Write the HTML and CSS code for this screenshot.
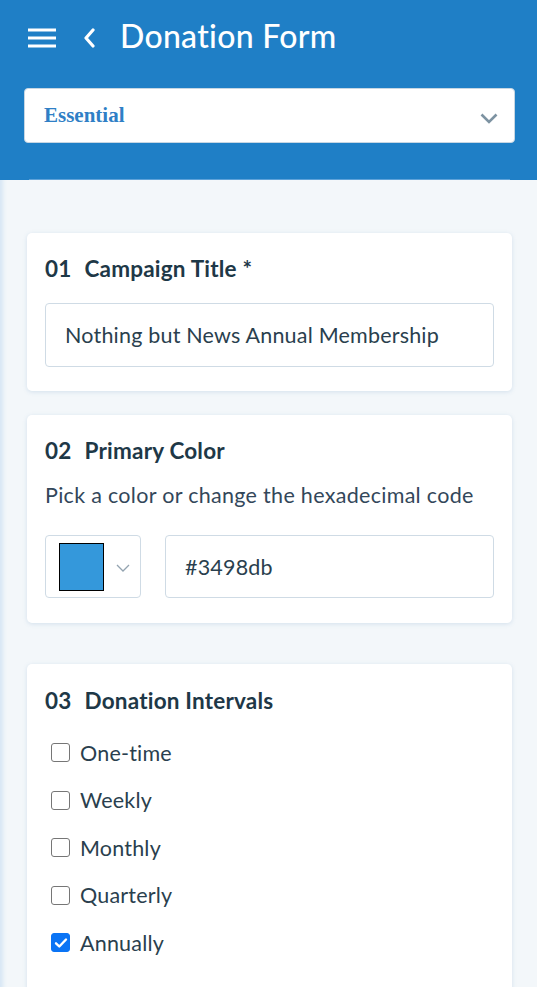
FILE: index.html
```html
<!DOCTYPE html>
<html lang="en">
<head>
<meta charset="utf-8">
<title>Donation Form</title>
<link rel="stylesheet" href="styles.css">
</head>
<body>
<header class="topbar">
  <div class="toprow">
    <button class="icon-btn menu" aria-label="Menu">
      <svg width="28" height="20" viewBox="0 0 28 20"><rect x="0" y="0.5" width="28" height="3" fill="#fff"/><rect x="0" y="8.5" width="28" height="3" fill="#fff"/><rect x="0" y="16.5" width="28" height="3" fill="#fff"/></svg>
    </button>
    <button class="icon-btn back" aria-label="Back">
      <svg width="12" height="20" viewBox="0 0 12 20"><path d="M10 2 L3 10 L10 18" fill="none" stroke="#fff" stroke-width="3.2" stroke-linecap="round" stroke-linejoin="round"/></svg>
    </button>
    <h1 class="page-title">Donation Form</h1>
  </div>
  <div class="plan-select">
    <span class="plan-name">Essential</span>
    <svg class="plan-caret" width="18" height="11" viewBox="0 0 18 11"><path d="M1.5 1.5 L9 9 L16.5 1.5" fill="none" stroke="#7d93a2" stroke-width="2.6"/></svg>
  </div>
  <div class="topbar-line"></div>
</header>

<main class="content">
  <section class="card card-title">
    <h2 class="card-heading"><span class="num">01</span>Campaign Title *</h2>
    <div class="field">Nothing but News Annual Membership</div>
  </section>

  <section class="card card-color">
    <h2 class="card-heading"><span class="num">02</span>Primary Color</h2>
    <p class="hint">Pick a color or change the hexadecimal code</p>
    <div class="color-row">
      <div class="picker">
        <span class="swatch"></span>
        <svg class="picker-caret" width="14" height="8" viewBox="0 0 14 8"><path d="M1 1 L7 7 L13 1" fill="none" stroke="#93a3b0" stroke-width="1.3"/></svg>
      </div>
      <div class="field hex">#3498db</div>
    </div>
  </section>

  <section class="card card-intervals">
    <h2 class="card-heading"><span class="num">03</span>Donation Intervals</h2>
    <ul class="checks">
      <li class="check"><span class="box"></span>One-time</li>
      <li class="check"><span class="box"></span>Weekly</li>
      <li class="check"><span class="box"></span>Monthly</li>
      <li class="check"><span class="box"></span>Quarterly</li>
      <li class="check"><span class="box on"><svg width="14" height="12" viewBox="0 0 14 12"><path d="M2 6.3 L5.3 9.5 L12 2.5" fill="none" stroke="#fff" stroke-width="2.4" stroke-linecap="round" stroke-linejoin="round"/></svg></span>Annually</li>
    </ul>
  </section>
</main>
</body>
</html>
```

FILE: styles.css
```css
* { box-sizing: border-box; }

html, body {
  margin: 0;
  padding: 0;
}

body {
  background: #f3f7fa;
  font-family: Lato, "Noto Sans", "Liberation Sans", sans-serif;
  color: #2a3f4e;
  box-shadow: inset 4px 0 4px -1px #d6e6f4;
  min-height: 987px;
}

.topbar {
  background: #1f7fc6;
  height: 180px;
  padding: 0 22px 0 24px;
  display: flex;
  flex-direction: column;
}

.toprow {
  height: 75px;
  display: flex;
  align-items: center;
}

.icon-btn {
  background: none;
  border: 0;
  padding: 0;
  display: flex;
  cursor: pointer;
}

.menu {
  margin-left: 4px;
  margin-top: 1px;
}

.back {
  margin-left: 27px;
  margin-top: 1px;
}

.page-title {
  margin: -3px 0 0 25px;
  color: #fff;
  font-size: 32px;
  font-weight: 500;
  letter-spacing: 0.3px;
  line-height: 40px;
}

.plan-select {
  margin-top: 13px;
  height: 55px;
  background: #fff;
  border: 1px solid #c6d6e3;
  border-radius: 4px;
  display: flex;
  align-items: center;
  justify-content: space-between;
  padding: 0 16px 0 19px;
}

.plan-name {
  font-family: "Liberation Serif", "Times New Roman", serif;
  font-weight: 700;
  font-size: 21px;
  color: #2f7fc6;
  margin-top: 0;
}

.plan-caret {
  margin-top: 5px;
}

.topbar-line {
  margin: auto 5px 0 5px;
  height: 1px;
  background: #5ea2d9;
}

.content {
  padding: 53px 25px 0 27px;
  display: flex;
  flex-direction: column;
}

.card {
  background: #fff;
  border-radius: 5px;
  box-shadow: 0 1px 4px rgba(120, 160, 200, 0.25);
  padding: 22px 18px 24px 18px;
}

.card-color {
  margin-top: 24px;
  padding-bottom: 25px;
}

.card-intervals {
  margin-top: 41px;
  padding-top: 23px;
  padding-bottom: 30px;
}

.card-heading {
  margin: 0;
  font-size: 22.5px;
  font-weight: 700;
  line-height: 28px;
  color: #1e3847;
  letter-spacing: 0.2px;
}

.num {
  margin-right: 13px;
}

.field {
  height: 64px;
  border: 1px solid #cfdbe5;
  border-radius: 4px;
  display: flex;
  align-items: center;
  padding: 0 19px;
  font-size: 21.5px;
  color: #2a3f4e;
  letter-spacing: 0.2px;
}

.card-title .field {
  margin-top: 20px;
}

.hint {
  margin: 16px 0 0 0;
  font-size: 21.5px;
  line-height: 28px;
  color: #33475a;
  letter-spacing: 0.3px;
}

.color-row {
  margin-top: 26px;
  display: flex;
  gap: 24px;
}

.picker {
  width: 96px;
  height: 63px;
  border: 1px solid #cfdbe5;
  border-radius: 4px;
  display: flex;
  align-items: center;
  padding-left: 13px;
  flex: none;
}

.swatch {
  width: 45px;
  height: 48px;
  background: #3498db;
  border: 1px solid #000;
  flex: none;
}

.picker-caret {
  margin-left: 12px;
  margin-top: 2px;
}

.color-row .hex {
  flex: 1;
  height: 63px;
}

.checks {
  list-style: none;
  margin: 14px 0 0 0;
  padding: 0;
}

.check {
  height: 47.5px;
  display: flex;
  align-items: center;
  font-size: 21.5px;
  color: #2a3f4e;
  letter-spacing: 0.2px;
}

.box {
  width: 19px;
  height: 19px;
  border: 1.5px solid #767676;
  border-radius: 3px;
  margin: 0 10px 0 6px;
  display: flex;
  align-items: center;
  justify-content: center;
  flex: none;
}

.box.on {
  background: #0a74f5;
  border-color: #0a74f5;
}
```
